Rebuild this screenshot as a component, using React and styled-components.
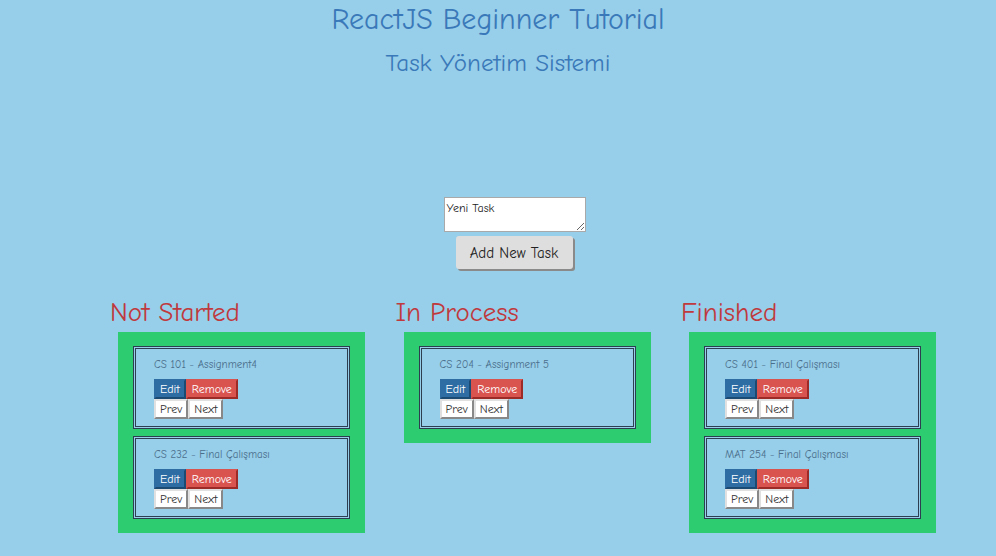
import React from 'react';
import styled, { createGlobalStyle } from 'styled-components';

const GlobalStyle = createGlobalStyle`
  html, body {
    margin: 0;
    padding: 0;
    background: #97cee9;
    font-family: "Comic Sans MS", "Comic Neue", "DejaVu Sans", sans-serif;
  }
`;

const Page = styled.div`
  min-height: 556px;
  background: #97cee9;
  overflow: hidden;
`;

const Header = styled.header`
  text-align: center;
  padding-top: 2px;
`;

const Title = styled.h1`
  margin: 0;
  font-size: 30px;
  font-weight: normal;
  color: #3a79b9;
  line-height: 36px;
`;

const SubTitle = styled.h2`
  margin: 10px 0 0;
  font-size: 25px;
  font-weight: normal;
  color: #3a79b9;
  line-height: 30px;
`;

const NewTaskForm = styled.div`
  display: flex;
  flex-direction: column;
  align-items: center;
  margin-top: 119px;
  padding-left: 33px;
`;

const TaskInput = styled.textarea`
  box-sizing: border-box;
  width: 142px;
  height: 35px;
  border: 1px solid #a9a9a9;
  padding: 3px 2px;
  font-family: inherit;
  font-size: 12px;
  color: #222;
  background: #fff;
  resize: both;
`;

const AddButton = styled.button`
  margin-top: 4px;
  margin-left: -1px;
  width: 117px;
  height: 33px;
  border: none;
  border-radius: 3px;
  background: #dedede;
  box-shadow: 2px 2px 0 #8a8a8a;
  font-family: inherit;
  font-size: 15px;
  color: #222;
  padding: 0;
`;

const Board = styled.div`
  display: grid;
  grid-template-columns: repeat(3, 285.5px);
  padding-left: 110px;
  margin-top: 27px;
`;

const Column = styled.section`
  display: flex;
  flex-direction: column;
  align-items: flex-start;
`;

const ColumnTitle = styled.h3`
  margin: 0;
  font-size: 27px;
  font-weight: normal;
  color: #c0393d;
  line-height: 34px;
`;

const Lane = styled.div`
  box-sizing: border-box;
  width: 247px;
  margin-left: 8px;
  margin-top: 2px;
  background: #2ecc71;
  padding: 14px 15px 14px;
  display: flex;
  flex-direction: column;
  gap: 7px;
`;

const Card = styled.div`
  box-sizing: border-box;
  height: 83px;
  border: 3px double #2c3e50;
  background: #97cee9;
  padding: 9px 18px 0;
`;

const CardTitle = styled.div`
  font-size: 11px;
  color: #4a6e8c;
  line-height: 14px;
`;

const ButtonRow = styled.div`
  display: flex;
  margin-top: ${(p) => p.$gap || 0}px;
`;

const tones = {
  edit: { bg: '#2e6da4', fg: '#fff', light: '#2e6da4', dark: '#1b4a73' },
  remove: { bg: '#d9534f', fg: '#fff', light: '#d9534f', dark: '#9c2a26' },
  plain: { bg: '#fff', fg: '#333', light: '#e0e0e0', dark: '#888' },
};

const SmallButton = styled.button`
  box-sizing: border-box;
  height: 20px;
  padding: 0 4px;
  font-family: inherit;
  font-size: 12px;
  line-height: 16px;
  background: ${(p) => tones[p.$tone].bg};
  color: ${(p) => tones[p.$tone].fg};
  border: 2px solid;
  border-color: ${(p) => tones[p.$tone].light} ${(p) => tones[p.$tone].dark}
    ${(p) => tones[p.$tone].dark} ${(p) => tones[p.$tone].light};
`;

const columns = [
  { title: 'Not Started', tasks: ['CS 101 - Assignment4', 'CS 232 - Final Çalışması'] },
  { title: 'In Process', tasks: ['CS 204 - Assignment 5'] },
  { title: 'Finished', tasks: ['CS 401 - Final Çalışması', 'MAT 254 - Final Çalışması'] },
];

const TaskCard = ({ title }) => (
  <Card>
    <CardTitle>{title}</CardTitle>
    <ButtonRow $gap={7}>
      <SmallButton $tone="edit">Edit</SmallButton>
      <SmallButton $tone="remove">Remove</SmallButton>
    </ButtonRow>
    <ButtonRow>
      <SmallButton $tone="plain">Prev</SmallButton>
      <SmallButton $tone="plain">Next</SmallButton>
    </ButtonRow>
  </Card>
);

const App = () => (
  <Page>
    <GlobalStyle />
    <Header>
      <Title>ReactJS Beginner Tutorial</Title>
      <SubTitle>Task Yönetim Sistemi</SubTitle>
    </Header>
    <NewTaskForm>
      <TaskInput defaultValue="Yeni Task" />
      <AddButton>Add New Task</AddButton>
    </NewTaskForm>
    <Board>
      {columns.map((col) => (
        <Column key={col.title}>
          <ColumnTitle>{col.title}</ColumnTitle>
          <Lane>
            {col.tasks.map((t) => (
              <TaskCard key={t} title={t} />
            ))}
          </Lane>
        </Column>
      ))}
    </Board>
  </Page>
);

export default App;
